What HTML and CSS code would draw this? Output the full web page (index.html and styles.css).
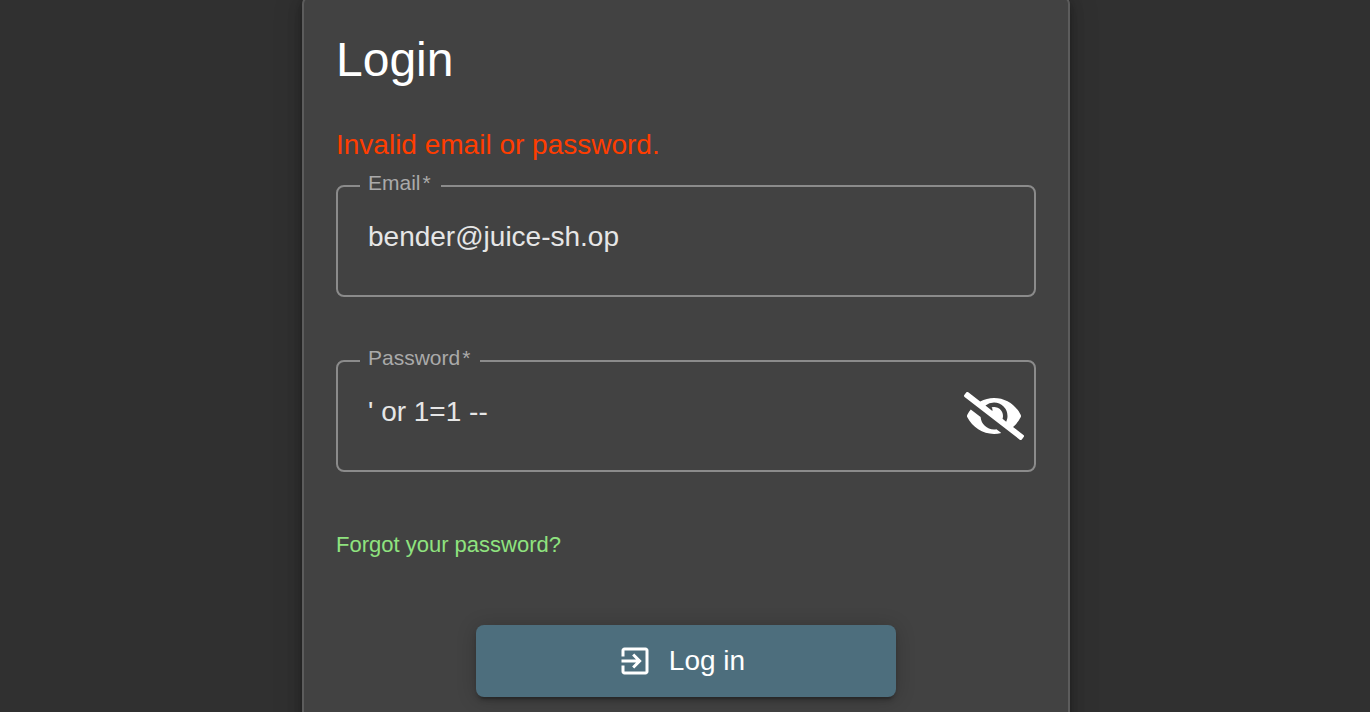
FILE: index.html
```html
<!DOCTYPE html>
<html lang="en">
<head>
<meta charset="utf-8">
<meta name="viewport" content="width=device-width, initial-scale=1">
<title>Login</title>
<link rel="stylesheet" href="styles.css">
</head>
<body>
<main class="card">
  <h1 class="title">Login</h1>
  <form class="form">
    <p class="error" role="alert">Invalid email or password.</p>
    <fieldset class="field">
      <legend class="legend"><label for="email">Email<span class="required">*</span></label></legend>
      <div class="control">
        <input class="input" id="email" type="text" value="bender@juice-sh.op">
      </div>
    </fieldset>
    <fieldset class="field">
      <legend class="legend"><label for="password">Password<span class="required">*</span></label></legend>
      <div class="control">
        <input class="input" id="password" type="text" value="' or 1=1 --">
        <button class="toggle" type="button" aria-label="Hide password">
          <svg class="eye" viewBox="0 0 640 512" aria-hidden="true"><path d="M320 400c-75.850 0-137.250-58.710-142.900-133.110L72.200 185.820c-13.790 17.300-26.480 35.590-36.720 55.590a32.350 32.350 0 0 0 0 29.190C89.710 376.410 197.070 448 320 448c26.910 0 52.870-4 77.890-10.460L346 397.390a144.130 144.130 0 0 1-26 2.610zm313.820 58.100l-110.550-85.440a331.250 331.250 0 0 0 81.250-102.070 32.350 32.350 0 0 0 0-29.190C550.290 135.590 442.930 64 320 64a308.150 308.150 0 0 0-147.320 37.700L45.460 3.370A16 16 0 0 0 23 6.180L3.370 31.450A16 16 0 0 0 6.180 53.900l588.360 454.730a16 16 0 0 0 22.460-2.810l19.640-25.270a16 16 0 0 0-2.820-22.450zm-183.720-142l-39.300-30.380A94.750 94.750 0 0 0 416 256a94.760 94.760 0 0 0-121.310-92.210A47.650 47.650 0 0 1 304 192a46.640 46.640 0 0 1-1.540 10l-73.610-56.890A142.310 142.310 0 0 1 320 112a143.920 143.920 0 0 1 144 144c0 21.630-5.290 41.790-13.900 60.110z"/></svg>
        </button>
      </div>
    </fieldset>
    <a class="forgot" href="#forgot">Forgot your password?</a>
    <button class="submit" type="submit">
      <svg class="enter" viewBox="0 0 24 24" aria-hidden="true"><path d="M10.090 15.590L11.500 17l5-5-5-5-1.410 1.410L12.670 11H3v2h9.670l-2.580 2.590zM19 3H5c-1.110 0-2 .9-2 2v4h2V5h14v14H5v-4H3v4c0 1.100.89 2 2 2h14c1.100 0 2-.9 2-2V5c0-1.100-.9-2-2-2z"/></svg>
      <span>Log in</span>
    </button>
  </form>
</main>
</body>
</html>
```
FILE: styles.css
```css
* {
  box-sizing: border-box;
}

html {
  scrollbar-width: none;
}

body {
  margin: 0;
  padding-left: 2px;
  background: #303030;
  color: #fff;
  font-family: "Liberation Sans", Arial, sans-serif;
  font-size: 28px;
  line-height: 36px;
}

.card {
  max-width: 768px;
  margin: -4px auto 0;
  padding: 34px 32px 48px;
  border: 2px solid #5c5c5c;
  border-radius: 8px;
  background: #424242;
  box-shadow: 0 6px 6px -2px rgba(0, 0, 0, 0.2), 0 6px 8px rgba(0, 0, 0, 0.14), 0 2px 16px rgba(0, 0, 0, 0.12), 0 0 32px rgba(0, 0, 0, 0.14);
}

.title {
  margin: 0 0 39px;
  font-size: 48px;
  font-weight: 400;
  line-height: 56px;
}

.form {
  display: flex;
  flex-direction: column;
}

.error {
  margin: 0 0 8px;
  color: #ff3d00;
}

.field {
  min-width: 0;
  margin: 0 0 49px;
  padding: 0;
  border: 2px solid #8b8b8b;
  border-radius: 8px;
}

.legend {
  margin-left: 22px;
  padding: 0 10px 6px 8px;
  color: #aaa;
  font-size: 21px;
  line-height: 24px;
}

.required {
  margin-left: 2px;
}

.control {
  display: flex;
  align-items: flex-start;
  padding: 12px 10px 34px 30px;
}

.input {
  flex: 1;
  min-width: 0;
  height: 48px;
  padding: 0;
  border: 0;
  outline: 0;
  background: transparent;
  color: #e6e6e6;
  font: inherit;
}

.toggle {
  display: flex;
  align-items: center;
  height: 56px;
  margin-bottom: -8px;
  padding: 0;
  border: 0;
  background: transparent;
  color: #fff;
  cursor: pointer;
}

.eye {
  width: 60px;
  height: 48px;
  fill: currentColor;
}

.forgot {
  align-self: flex-start;
  margin: 9px 0 65px;
  color: #8fe37f;
  font-size: 22px;
  line-height: 30px;
  text-decoration: none;
}

.submit {
  display: flex;
  align-items: center;
  align-self: center;
  justify-content: center;
  gap: 16px;
  width: 60%;
  height: 72px;
  padding: 0 10px 0 0;
  border: 0;
  border-radius: 8px;
  background: #4d6e7d;
  box-shadow: 0 6px 2px -4px rgba(0, 0, 0, 0.2), 0 4px 4px rgba(0, 0, 0, 0.14), 0 2px 20px rgba(0, 0, 0, 0.2);
  color: #fff;
  font: inherit;
  cursor: pointer;
}

.enter {
  width: 36px;
  height: 36px;
  fill: currentColor;
}
```
